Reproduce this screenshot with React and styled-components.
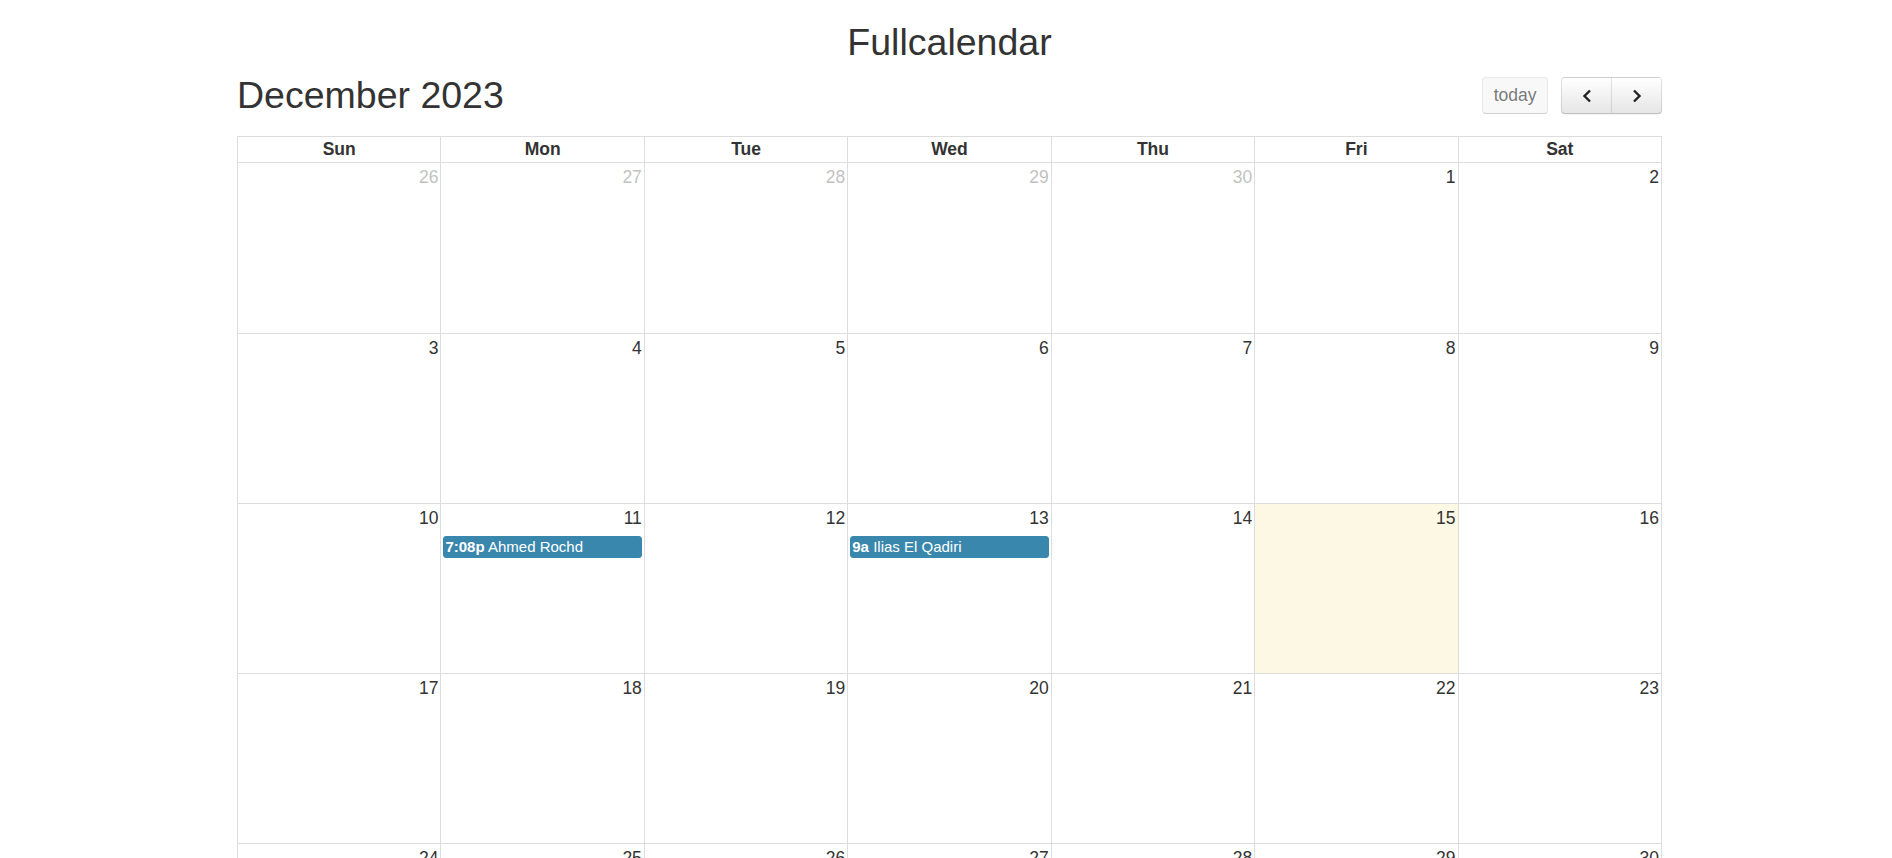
import React from "react";
import styled, { createGlobalStyle } from "styled-components";

const GlobalStyle = createGlobalStyle`
  html, body {
    margin: 0;
    padding: 0;
    background: #fff;
  }
  body {
    font-family: "Liberation Sans", Arial, sans-serif;
    font-size: 17.5px;
    color: #333;
  }
  * {
    box-sizing: border-box;
  }
`;

const Page = styled.div`
  width: 1425px;
  margin: 0 230px 0 237px;
`;

const PageTitle = styled.h1`
  margin: 22px 0 12px;
  font-size: 37.5px;
  font-weight: 400;
  line-height: 1.1;
  text-align: center;
`;

const Toolbar = styled.div`
  display: flex;
  justify-content: space-between;
  align-items: flex-start;
  margin-bottom: 19.5px;
`;

const ViewTitle = styled.h2`
  margin: 0;
  font-size: 37.5px;
  font-weight: 400;
  line-height: 1.1;
`;

const ButtonBar = styled.div`
  display: flex;
  gap: 13px;
  margin-top: 2px;
`;

const BaseButton = styled.button`
  height: 36.75px;
  padding: 0 10.5px;
  font-family: inherit;
  font-size: 17.5px;
  color: #333;
  border: 1px solid;
  border-color: rgba(0, 0, 0, 0.1) rgba(0, 0, 0, 0.1) rgba(0, 0, 0, 0.25);
  background-color: #f5f5f5;
  text-shadow: 0 1px 1px rgba(255, 255, 255, 0.75);
  cursor: pointer;
`;

const TodayButton = styled(BaseButton)`
  border-radius: 4px;
  opacity: 0.65;
  cursor: default;
`;

const ButtonGroup = styled.div`
  display: flex;
`;

const NavButton = styled(BaseButton)`
  width: 51px;
  margin-left: ${(p) => (p.$side === "left" ? "0" : "-1px")};
  display: flex;
  align-items: center;
  justify-content: center;
  background-image: linear-gradient(to bottom, #ffffff, #e6e6e6);
  box-shadow: inset 0 1px 0 rgba(255, 255, 255, 0.2),
    0 1px 2px rgba(0, 0, 0, 0.05);
  border-radius: ${(p) => (p.$side === "left" ? "4px 0 0 4px" : "0 4px 4px 0")};
`;

const Grid = styled.div`
  display: grid;
  grid-template-columns: repeat(7, 1fr);
  grid-template-rows: 26px 171px repeat(5, 170px);
  border-top: 1px solid #ddd;
  border-left: 1px solid #ddd;
`;

const HeadCell = styled.div`
  border-right: 1px solid #ddd;
  border-bottom: 1px solid #ddd;
  font-weight: 700;
  text-align: center;
  line-height: 25px;
`;

const DayCell = styled.div`
  border-right: 1px solid #ddd;
  border-bottom: 1px solid #ddd;
  background: ${(p) => (p.$today ? "#fcf8e3" : "#fff")};
  min-width: 0;
`;

const DayNumber = styled.div`
  padding: 2px;
  line-height: 25px;
  text-align: right;
  opacity: ${(p) => (p.$other ? 0.3 : 1)};
`;

const Event = styled.div`
  margin: 3px 2px 0;
  padding: 0 1px;
  border: 1px solid #3a87ad;
  border-radius: 3px;
  background: #3a87ad;
  color: #fff;
  font-size: 15px;
  line-height: 1.3;
  white-space: nowrap;
  overflow: hidden;
`;

const EventTime = styled.span`
  font-weight: 700;
`;

const Chevron = ({ dir }) => (
  <svg width="10" height="14" viewBox="0 0 10 14">
    <polyline
      points={dir === "left" ? "8,1.5 2.5,7 8,12.5" : "2,1.5 7.5,7 2,12.5"}
      fill="none"
      stroke="#222"
      strokeWidth="2.4"
    />
  </svg>
);

const DAYS = ["Sun", "Mon", "Tue", "Wed", "Thu", "Fri", "Sat"];

const EVENTS = {
  "12-11": { time: "7:08p", title: "Ahmed Rochd" },
  "12-13": { time: "9a", title: "Ilias El Qadiri" },
};

function buildCells() {
  const cells = [];
  const start = new Date(2023, 10, 26);
  for (let i = 0; i < 42; i++) {
    const d = new Date(start);
    d.setDate(start.getDate() + i);
    cells.push({
      key: `${d.getMonth() + 1}-${d.getDate()}`,
      day: d.getDate(),
      other: d.getMonth() !== 11,
      today: d.getMonth() === 11 && d.getDate() === 15,
    });
  }
  return cells;
}

export default function App() {
  const cells = buildCells();
  return (
    <>
      <GlobalStyle />
      <Page>
        <PageTitle>Fullcalendar</PageTitle>
        <Toolbar>
          <ViewTitle>December 2023</ViewTitle>
          <ButtonBar>
            <TodayButton disabled>today</TodayButton>
            <ButtonGroup>
              <NavButton $side="left">
                <Chevron dir="left" />
              </NavButton>
              <NavButton $side="right">
                <Chevron dir="right" />
              </NavButton>
            </ButtonGroup>
          </ButtonBar>
        </Toolbar>
        <Grid>
          {DAYS.map((d) => (
            <HeadCell key={d}>{d}</HeadCell>
          ))}
          {cells.map((c) => {
            const ev = !c.other ? EVENTS[c.key] : null;
            return (
              <DayCell key={c.key} $today={c.today}>
                <DayNumber $other={c.other}>{c.day}</DayNumber>
                {ev && (
                  <Event>
                    <EventTime>{ev.time}</EventTime> {ev.title}
                  </Event>
                )}
              </DayCell>
            );
          })}
        </Grid>
      </Page>
    </>
  );
}
